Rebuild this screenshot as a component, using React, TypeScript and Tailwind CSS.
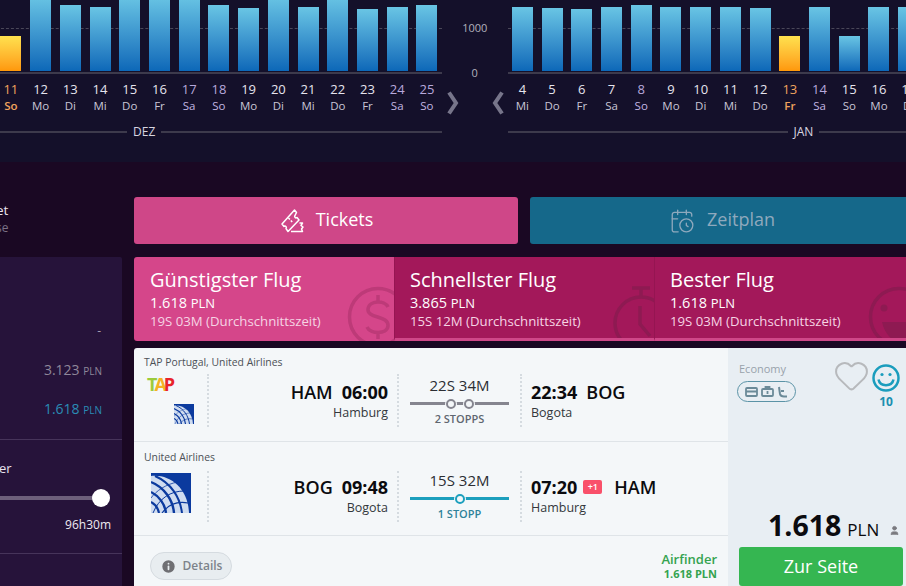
import { CalendarClock, Heart, Info, User } from "lucide-react";

type Day = { n: number; d: string; top: number; tone?: "we" | "hot" };

const dez: Day[] = [
  { n: 11, d: "So", top: 36, tone: "hot" },
  { n: 12, d: "Mo", top: -4 },
  { n: 13, d: "Di", top: 5 },
  { n: 14, d: "Mi", top: 7 },
  { n: 15, d: "Do", top: -4 },
  { n: 16, d: "Fr", top: -4 },
  { n: 17, d: "Sa", top: -4, tone: "we" },
  { n: 18, d: "So", top: 5, tone: "we" },
  { n: 19, d: "Mo", top: 8 },
  { n: 20, d: "Di", top: -4 },
  { n: 21, d: "Mi", top: 7 },
  { n: 22, d: "Do", top: -4 },
  { n: 23, d: "Fr", top: 9 },
  { n: 24, d: "Sa", top: 7, tone: "we" },
  { n: 25, d: "So", top: 5, tone: "we" },
];

const jan: Day[] = [
  { n: 4, d: "Mi", top: 7 },
  { n: 5, d: "Do", top: 8 },
  { n: 6, d: "Fr", top: 9 },
  { n: 7, d: "Sa", top: 7 },
  { n: 8, d: "So", top: 5, tone: "we" },
  { n: 9, d: "Mo", top: 7 },
  { n: 10, d: "Di", top: 7 },
  { n: 11, d: "Mi", top: 7 },
  { n: 12, d: "Do", top: 8 },
  { n: 13, d: "Fr", top: 36, tone: "hot" },
  { n: 14, d: "Sa", top: 7, tone: "we" },
  { n: 15, d: "So", top: 36 },
  { n: 16, d: "Mo", top: 7 },
  { n: 17, d: "Di", top: 7 },
];

function DayCol({ day }: { day: Day }) {
  const numColor = day.tone === "hot" ? "text-[#f0a35e]" : day.tone === "we" ? "text-[#b7a8dc]" : "text-[#e6e4ee]";
  const dayColor = day.tone === "hot" ? "text-[#f0a35e] font-semibold" : day.tone === "we" ? "text-[#c2b6e2]" : "text-[#c9c6d6]";
  return (
    <div className="w-[29.72px] shrink-0 flex flex-col items-center">
      <span className={`text-[13px] leading-[16px] ${numColor}`}>{day.n}</span>
      <span className={`text-[11.5px] leading-[16px] mt-[1px] ${dayColor}`}>{day.d}</span>
    </div>
  );
}

function Bars({ days }: { days: Day[] }) {
  return (
    <div className="relative h-[71px] flex items-end overflow-hidden">
      <div className="absolute left-0 right-0 top-[28px] border-t border-dashed border-[#4a4758]"></div>
      {days.map((day) => (
        <div key={day.n} className="relative w-[29.72px] shrink-0 flex justify-center">
          <div
            className={`w-[21px] ${day.tone === "hot" ? "bg-gradient-to-b from-[#fee14e] to-[#ff9808]" : "bg-gradient-to-b from-[#69c5e4] to-[#0c68b8]"}`}
            style={{ height: 71 - day.top }}
          ></div>
        </div>
      ))}
    </div>
  );
}

function ChartGroup({ days, month, lead, width }: { days: Day[]; month: string; lead: number; width: string }) {
  return (
    <div className={`${width} shrink-0`}>
      <Bars days={days} />
      <div className="h-[2px] mt-[1px] bg-[#3d3a4c]"></div>
      <div className="flex mt-[7px]">
        {days.map((day) => (
          <DayCol key={day.n} day={day} />
        ))}
      </div>
      <div className="flex items-center mt-[9px] h-[18px]">
        <div className="h-[2px] bg-[#3d3a4c]" style={{ width: lead }}></div>
        <span className="px-[6px] text-[12px] font-medium text-[#d8d6e0]">{month}</span>
        <div className="h-[2px] flex-1 bg-[#3d3a4c]"></div>
      </div>
    </div>
  );
}

function Chevron({ flip }: { flip?: boolean }) {
  return (
    <svg width="13" height="24" viewBox="0 0 13 24" className={flip ? "-scale-x-100" : ""}>
      <path d="M3 1.5 L10 12 L3 22.5" fill="none" stroke="#77758a" strokeWidth="4" />
    </svg>
  );
}

function UnitedGlobe({ size }: { size: number }) {
  return (
    <svg width={size} height={size} viewBox="0 0 40 40">
      <rect width="40" height="40" fill="#0b3a9e" />
      <path d="M0 3 C20 1 37 16 38 40 H0 Z" fill="#cfdcf0" />
      <g fill="none" stroke="#0b3a9e">
        <path d="M4 3 C20 10 29 24 31 40" strokeWidth="2" />
        <path d="M0 9 C13 14 22 27 23 40" strokeWidth="2.4" />
        <path d="M0 19 C8 23 14 31 15 40" strokeWidth="2.4" />
        <path d="M0 29 C4 31 7 35 8 40" strokeWidth="2.2" />
        <path d="M27 9 C15 11 5 18 0 25" strokeWidth="0.8" />
        <path d="M33 18 C20 18 8 25 2 40" strokeWidth="1" />
        <path d="M37 30 C26 28 17 32 11 40" strokeWidth="1.2" />
      </g>
    </svg>
  );
}

function Dots({ h }: { h: string }) {
  return <div className={`${h} border-l-[2px] border-dotted border-[#d5dbe0] shrink-0`}></div>;
}

function TabCard({ title, price, time, active, icon }: { title: string; price: string; time: string; active?: boolean; icon: React.ReactNode }) {
  return (
    <div
      className={`relative w-[260px] shrink-0 h-[84px] overflow-hidden pt-[9px] text-white ${
        active ? "pl-[16px] bg-[#d5468a] rounded-l-[3px]" : "pl-[15px] bg-[#a3185a] border-b-[3px] border-[#cf4788] border-l border-l-[#951552]"
      }`}
    >
      <div className="text-[20px] leading-[27px]">{title}</div>
      <div className="text-[14.5px] leading-[18px] mt-[1px]">
        {price} <span className="text-[13px]">PLN</span>
      </div>
      <div className="text-[13.2px] leading-[18px] text-[#f6d4e4]">{time}</div>
      {icon}
    </div>
  );
}

function Stops({ count, color }: { count: number; color: string }) {
  return (
    <div className="w-[99px] h-[3px] mx-auto flex items-center justify-center gap-[8px]" style={{ backgroundColor: color }}>
      {Array.from({ length: count }).map((_, i) => (
        <span key={i} className="w-[10px] h-[10px] rounded-full border-[2.5px] bg-[#f4f7f9] ring-1 ring-[#f4f7f9]" style={{ borderColor: color }}></span>
      ))}
    </div>
  );
}

function FlightRow(props: {
  airline: string;
  logo: React.ReactNode;
  from: string;
  dep: string;
  fromCity: string;
  dur: string;
  stops: number;
  stopLabel: string;
  color: string;
  labelColor: string;
  arr: string;
  to: string;
  toCity: string;
  plus?: boolean;
  labelTop: string;
  dotH: string;
}) {
  return (
    <div className="h-[94px] border-b border-[#dfe4e8]">
      <div className={`pl-[10px] text-[10.4px] leading-[14px] text-[#4c5157] ${props.labelTop}`}>{props.airline}</div>
      <div className="flex mt-[5px]">
        <div className="w-[73px] pl-[10px] shrink-0">{props.logo}</div>
        <Dots h={props.dotH} />
        <div className="w-[188px] text-right pr-[9px] shrink-0">
          <div className="text-[18px] leading-[24px] text-[#0b0b0f] mt-[6px]">
            <span className="font-semibold">{props.from}</span>
            <span className="font-bold ml-[9px]">{props.dep}</span>
          </div>
          <div className="text-[12.5px] leading-[16px] mt-[1px] text-[#33373c]">{props.fromCity}</div>
        </div>
        <Dots h={props.dotH} />
        <div className="w-[121px] shrink-0 text-center">
          <div className="text-[15px] leading-[20px] mt-[1px] text-[#2b2e33]">{props.dur}</div>
          <div className="mt-[7px]">
            <Stops count={props.stops} color={props.color} />
          </div>
          <div className="text-[11px] leading-[14px] mt-[7px] font-semibold" style={{ color: props.labelColor }}>
            {props.stopLabel}
          </div>
        </div>
        <Dots h={props.dotH} />
        <div className="pl-[9px]">
          <div className="flex items-center text-[18px] leading-[24px] text-[#0b0b0f] mt-[6px]">
            <span className="font-bold">{props.arr}</span>
            {props.plus && (
              <span className="ml-[6px] w-[19px] h-[14px] rounded-[2px] bg-[#f9506a] text-white text-[9px] leading-[14px] text-center font-semibold">+1</span>
            )}
            <span className={`font-semibold ${props.plus ? "ml-[12px]" : "ml-[9px]"}`}>{props.to}</span>
          </div>
          <div className="text-[12.5px] leading-[16px] mt-[1px] text-[#33373c]">{props.toCity}</div>
        </div>
      </div>
    </div>
  );
}

export default function App() {
  return (
    <div className="w-[906px] h-[586px] overflow-hidden bg-[#1a0823] font-['Open_Sans',sans-serif]">
      {/* price chart */}
      <div className="h-[162px] bg-[#14102a] flex overflow-hidden">
        <div className="ml-[-4px] shrink-0">
          <ChartGroup days={dez} month="DEZ" lead={131} width="w-[446px]" />
        </div>
        <div className="w-[65.5px] shrink-0 pt-[21px] text-[11px] leading-[14px] text-[#b3b1bd] text-center">
          <div>1000</div>
          <div className="mt-[31px]">0</div>
          <div className="flex justify-between mt-[11px] pl-[4px] pr-[3px]">
            <Chevron />
            <Chevron flip />
          </div>
        </div>
        <ChartGroup days={jan} month="JAN" lead={280} width="w-[416px]" />
      </div>

      <div className="flex pt-[35px]">
        {/* filter sidebar */}
        <div className="w-[122px] shrink-0 mr-[12px]">
          <div className="h-[60px] pt-[4px]">
            <div className="text-[13.5px] leading-[18px] text-[#e8e4ee] ml-[-4px]">et</div>
            <div className="text-[12px] leading-[16px] text-[#7b7186] ml-[-4px] mt-[1px]">se</div>
          </div>
          <div className="h-[329px] bg-[#26133a] text-right rounded-tr-[2px]">
            <div className="pt-[65px] pr-[21px] text-[12px] leading-[18px] text-[#a59db0]">-</div>
            <div className="pr-[20px] mt-[21px] text-[#8f8799] text-[14px] leading-[18px]">
              3.123 <span className="text-[10px]">PLN</span>
            </div>
            <div className="pr-[20px] mt-[20px] text-[#2a8cb5] text-[14px] leading-[18px]">
              1.618 <span className="text-[10px]">PLN</span>
            </div>
            <div className="h-[1px] bg-[#46345a] mt-[20px]"></div>
            <div className="text-left text-[13px] leading-[18px] text-[#e8e4ee] mt-[19px]">
              <span className="ml-[-1px]">er</span>
            </div>
            <div className="relative h-[18px] mt-[12px] flex items-center">
              <div className="w-[101px] h-[4px] bg-[#6d5f7b]"></div>
              <div className="w-[18px] h-[18px] rounded-full bg-white ml-[-9px]"></div>
            </div>
            <div className="pr-[11px] text-[12px] leading-[16px] text-[#eeeaf2] mt-[10px]">96h30m</div>
            <div className="h-[1px] bg-[#46345a] mt-[20px]"></div>
          </div>
        </div>

        {/* results */}
        <div className="w-[780px] shrink-0">
          <div className="flex gap-[12px]">
            <div className="w-[384px] h-[47px] pb-[2px] rounded-[3px] bg-[#cf4788] flex items-center justify-center gap-[12px] text-white text-[18px] shrink-0">
              <svg width="25" height="26" viewBox="0 0 25 26" fill="none" stroke="#fff" strokeWidth="1.5" strokeLinejoin="round" className="mt-[3px]">
                <path d="M15.5 2 L3 16 L5 18.5 C6.5 17.5 8 19 7 20.5 L9 23.5 L20 12 L18 9.5 C16.5 10.5 15 9 16 7.5 L17.5 4.5 Z" />
                <path d="M9.5 10 L14 15" strokeDasharray="2 1.5" />
                <path d="M20.5 15 L23.5 15 L22 17.5 L24 19 L22.5 21 L23.5 23.5 L12 23.5" />
              </svg>
              Tickets
            </div>
            <div className="w-[384px] h-[47px] pb-[2px] rounded-[3px] bg-[#15688a] flex items-center justify-center gap-[12px] text-[#8fa9bd] text-[18px] shrink-0">
              <CalendarClock size={26} strokeWidth={1.2} className="mt-[3px]" />
              Zeitplan
            </div>
          </div>
          <div className="flex mt-[13px]">
            <TabCard
              active
              title="Günstigster Flug"
              price="1.618"
              time="19S 03M (Durchschnittszeit)"
              icon={
                <svg width="62" height="62" viewBox="0 0 62 62" className="absolute left-[213px] top-[29px]" fill="none" stroke="#bd3a78" strokeWidth="3.5">
                  <circle cx="31" cy="31" r="28.5" />
                  <path d="M41 21 C38 14 22 14 21 23 C20 33 42 29 41 40 C40 49 23 48 20 41 M31 9 V15 M31 47 V53" />
                </svg>
              }
            />
            <TabCard
              title="Schnellster Flug"
              price="3.865"
              time="15S 12M (Durchschnittszeit)"
              icon={
                <svg width="60" height="60" viewBox="0 0 60 60" className="absolute left-[217px] top-[29px]" fill="none" stroke="#8e1a52" strokeWidth="3.5">
                  <circle cx="29" cy="37" r="26" />
                  <path d="M20 2 H38 M29 2 V11 M48 12 L52 16 M28 20 V38 L38 50" />
                </svg>
              }
            />
            <TabCard
              title="Bester Flug"
              price="1.618"
              time="19S 03M (Durchschnittszeit)"
              icon={
                <svg width="62" height="62" viewBox="0 0 62 62" className="absolute left-[213px] top-[29px]" fill="none" stroke="#8e1a52" strokeWidth="3.5">
                  <circle cx="31" cy="31" r="28.5" />
                  <circle cx="16" cy="22" r="3.5" fill="#8e1a52" stroke="none" />
                  <path d="M14 36 H62 V60 H31 C22 52 16 46 14 36 Z" fill="#8e1a52" stroke="none" />
                </svg>
              }
            />
          </div>

          {/* flight card */}
          <div className="flex h-[238px] mt-[7px] rounded-t-[3px] overflow-hidden bg-[#f4f7f9]">
            <div className="w-[594px] shrink-0">
              <FlightRow
                airline="TAP Portugal, United Airlines"
                logo={
                  <div className="h-[53px]">
                    <div className="ml-[3px] text-[18px] leading-[18px] font-bold tracking-[-3px] mt-[1px]">
                      <span className="text-[#9ccb3b]">T</span>
                      <span className="text-[#f5b223]">A</span>
                      <span className="text-[#e8232a]">P</span>
                    </div>
                    <div className="mt-[11px] ml-[30px]">
                      <UnitedGlobe size={20} />
                    </div>
                  </div>
                }
                from="HAM"
                dep="06:00"
                fromCity="Hamburg"
                dur="22S 34M"
                stops={2}
                stopLabel="2 STOPPS"
                color="#85858f"
                labelColor="#5f6670"
                arr="22:34"
                to="BOG"
                toCity="Bogota"
                labelTop="pt-[7px]"
                dotH="h-[53px]"
              />
              <FlightRow
                airline="United Airlines"
                logo={
                  <div className="ml-[7px] mt-[4px]">
                    <UnitedGlobe size={40} />
                  </div>
                }
                from="BOG"
                dep="09:48"
                fromCity="Bogota"
                dur="15S 32M"
                stops={1}
                stopLabel="1 STOPP"
                color="#1c9fbd"
                labelColor="#2e8299"
                arr="07:20"
                to="HAM"
                toCity="Hamburg"
                plus
                labelTop="pt-[8px]"
                dotH="h-[51px] mt-[2px]"
              />
              <div className="flex justify-between pl-[16px] pr-[11px] pt-[16px]">
                <div className="w-[82px] h-[28px] rounded-full border border-[#d5dbe0] bg-[#e8edf0] flex items-center justify-center gap-[6px] text-[12px] font-semibold text-[#7d838a]">
                  <Info size={17} fill="#6f6f73" color="#e8edf0" strokeWidth={2.5} />
                  Details
                </div>
                <div className="text-right font-semibold text-[#35a350] -mt-[1px]">
                  <div className="text-[13px] leading-[16px]">Airfinder</div>
                  <div className="text-[11px] leading-[14px] font-bold">1.618 PLN</div>
                </div>
              </div>
            </div>
            <div className="w-[186px] shrink-0 bg-[#e8eef3] pl-[11px] pt-[14px] flex flex-col">
              <div className="flex">
                <div className="w-[94px]">
                  <div className="text-[11px] leading-[14px] text-[#98a2ab]">Economy</div>
                  <div className="w-[59px] h-[21px] mt-[5px] ml-[-2px] rounded-full border border-[#5b93a6] flex items-center justify-center gap-[3px] text-[#6b8a98]">
                    <svg width="13" height="10" viewBox="0 0 13 10" fill="none" stroke="currentColor" strokeWidth="1.8">
                      <rect x="1" y="1" width="11" height="8" rx="1" />
                      <path d="M1 4.5 H12" />
                    </svg>
                    <svg width="13" height="11" viewBox="0 0 13 11" fill="none" stroke="currentColor" strokeWidth="1.8">
                      <rect x="1" y="3" width="11" height="7" rx="1" />
                      <path d="M4.5 3 V1 H8.5 V3 M6.5 5 V8" />
                    </svg>
                    <svg width="11" height="12" viewBox="0 0 11 12" fill="none" stroke="currentColor" strokeWidth="2">
                      <path d="M2 1 L3 8 C3.5 10 5 10.5 7 10.5 H10 M4 5 H7" />
                    </svg>
                  </div>
                </div>
                <Heart size={37} strokeWidth={1.3} color="#b7b9bc" className="-mt-[5px]" />
                <div className="ml-[2px] flex flex-col items-center w-[28px] mt-[2px]">
                  <svg width="28" height="28" viewBox="0 0 28 28" fill="none" stroke="#1b9dbd" strokeWidth="2.5">
                    <circle cx="14" cy="14" r="12.5" />
                    <circle cx="10" cy="10.5" r="1.6" fill="#1b9dbd" stroke="none" />
                    <circle cx="18" cy="10.5" r="1.6" fill="#1b9dbd" stroke="none" />
                    <path d="M6.5 15.5 C8 23 20 23 21.5 15.5" />
                  </svg>
                  <div className="text-[12px] leading-[14px] font-bold text-[#1b8fb0] mt-[3px]">10</div>
                </div>
              </div>
              <div className="flex items-baseline mt-[96px] ml-[29px] text-[#0b0b0f]">
                <span className="text-[28.5px] leading-[40px] font-bold">1.618</span>
                <span className="text-[17px] ml-[6px]">PLN</span>
                <User size={11} fill="#7a7a7f" color="#7a7a7f" className="ml-[10px]" />
              </div>
              <div className="w-[164px] h-[40px] mt-[2px] rounded-[3px] bg-[#35b651] text-white text-[18px] flex items-center justify-center">
                Zur Seite
              </div>
            </div>
          </div>
        </div>
      </div>
    </div>
  );
}
